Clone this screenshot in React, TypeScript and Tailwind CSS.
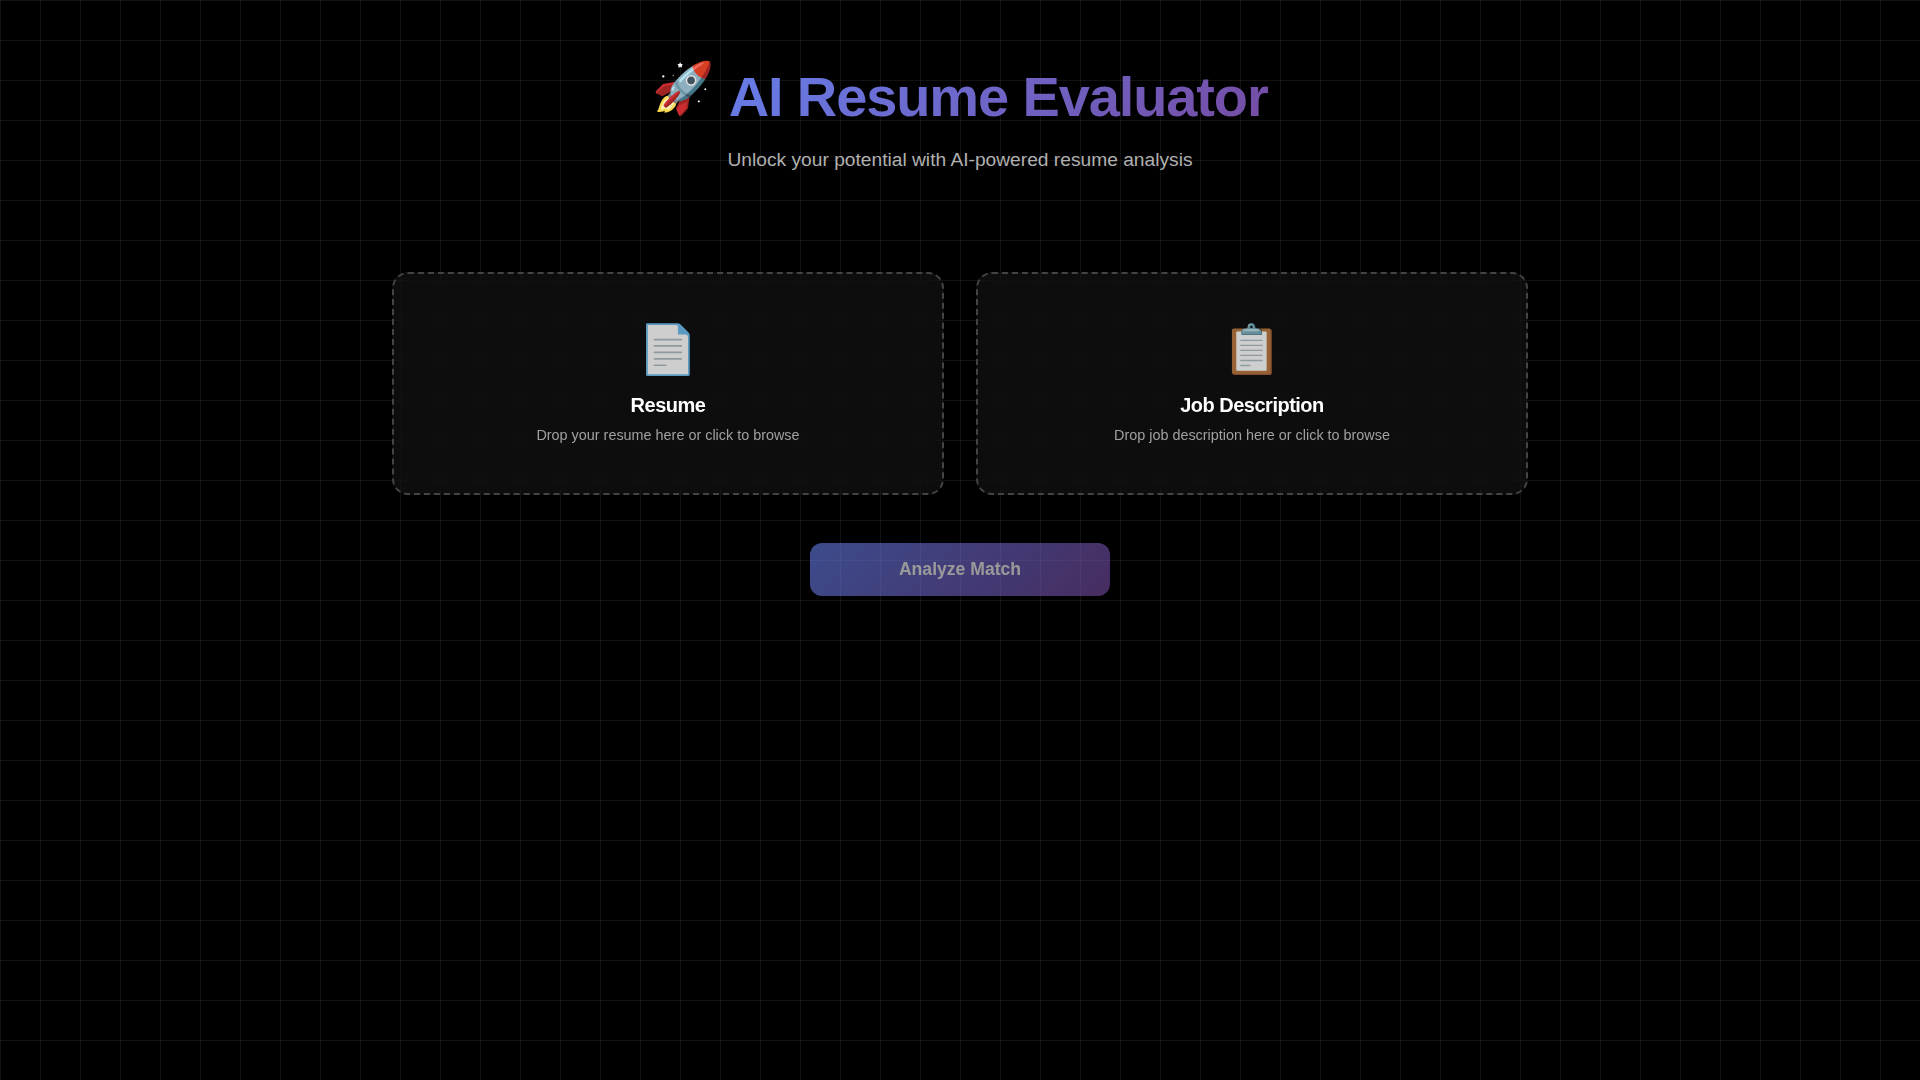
export default function App() {
  const card = "flex-1 h-[223px] flex flex-col items-center pt-[40px] rounded-[16px] border-2 border-dashed border-[#444444] bg-[rgba(255,255,255,0.05)] backdrop-blur-[10px]";
  return (
    <div className="min-h-screen bg-black bg-[linear-gradient(rgba(255,255,255,0.07)_1px,transparent_1px),linear-gradient(90deg,rgba(255,255,255,0.07)_1px,transparent_1px)] bg-[size:40px_40px] font-['Liberation_Sans',Arial,sans-serif] text-white">
      <div className="mx-auto w-[1200px] px-8 pt-[55px]">
        <header className="flex flex-col items-center mb-[98px]">
          <div className="flex items-start h-[84px]">
            <span className="text-[50px] leading-[58px] mt-[4px] mr-[14px] font-['Noto_Color_Emoji',sans-serif]">🚀</span>
            <h1 className="text-[56px] leading-[84px] font-bold tracking-[-1.12px] bg-[linear-gradient(135deg,#667eea_0%,#764ba2_100%)] bg-clip-text text-transparent">AI Resume Evaluator</h1>
          </div>
          <p className="mt-[6px] text-[19.2px] leading-[29px] text-[#b0b0b0]">Unlock your potential with AI-powered resume analysis</p>
        </header>
        <div className="flex gap-[32px]">
          <div className={card}>
            <div className="text-[48px] leading-[72px] opacity-80 font-['Noto_Color_Emoji',sans-serif]">📄</div>
            <h3 className="mt-[4px] text-[20px] leading-[30px] font-bold tracking-[-0.5px]">Resume</h3>
            <p className="mt-[4px] text-[14.4px] leading-[22px] text-[#a0a0a0]">Drop your resume here or click to browse</p>
          </div>
          <div className={card}>
            <div className="text-[48px] leading-[72px] opacity-80 font-['Noto_Color_Emoji',sans-serif]">📋</div>
            <h3 className="mt-[4px] text-[20px] leading-[30px] font-bold tracking-[-0.5px]">Job Description</h3>
            <p className="mt-[4px] text-[14.4px] leading-[22px] text-[#a0a0a0]">Drop job description here or click to browse</p>
          </div>
        </div>
        <div className="flex justify-center mt-[48px]">
          <button className="w-[300px] h-[53px] rounded-[12px] text-[17.6px] font-bold text-white bg-[linear-gradient(135deg,#667eea_0%,#764ba2_100%)] opacity-60">Analyze Match</button>
        </div>
      </div>
    </div>
  );
}
